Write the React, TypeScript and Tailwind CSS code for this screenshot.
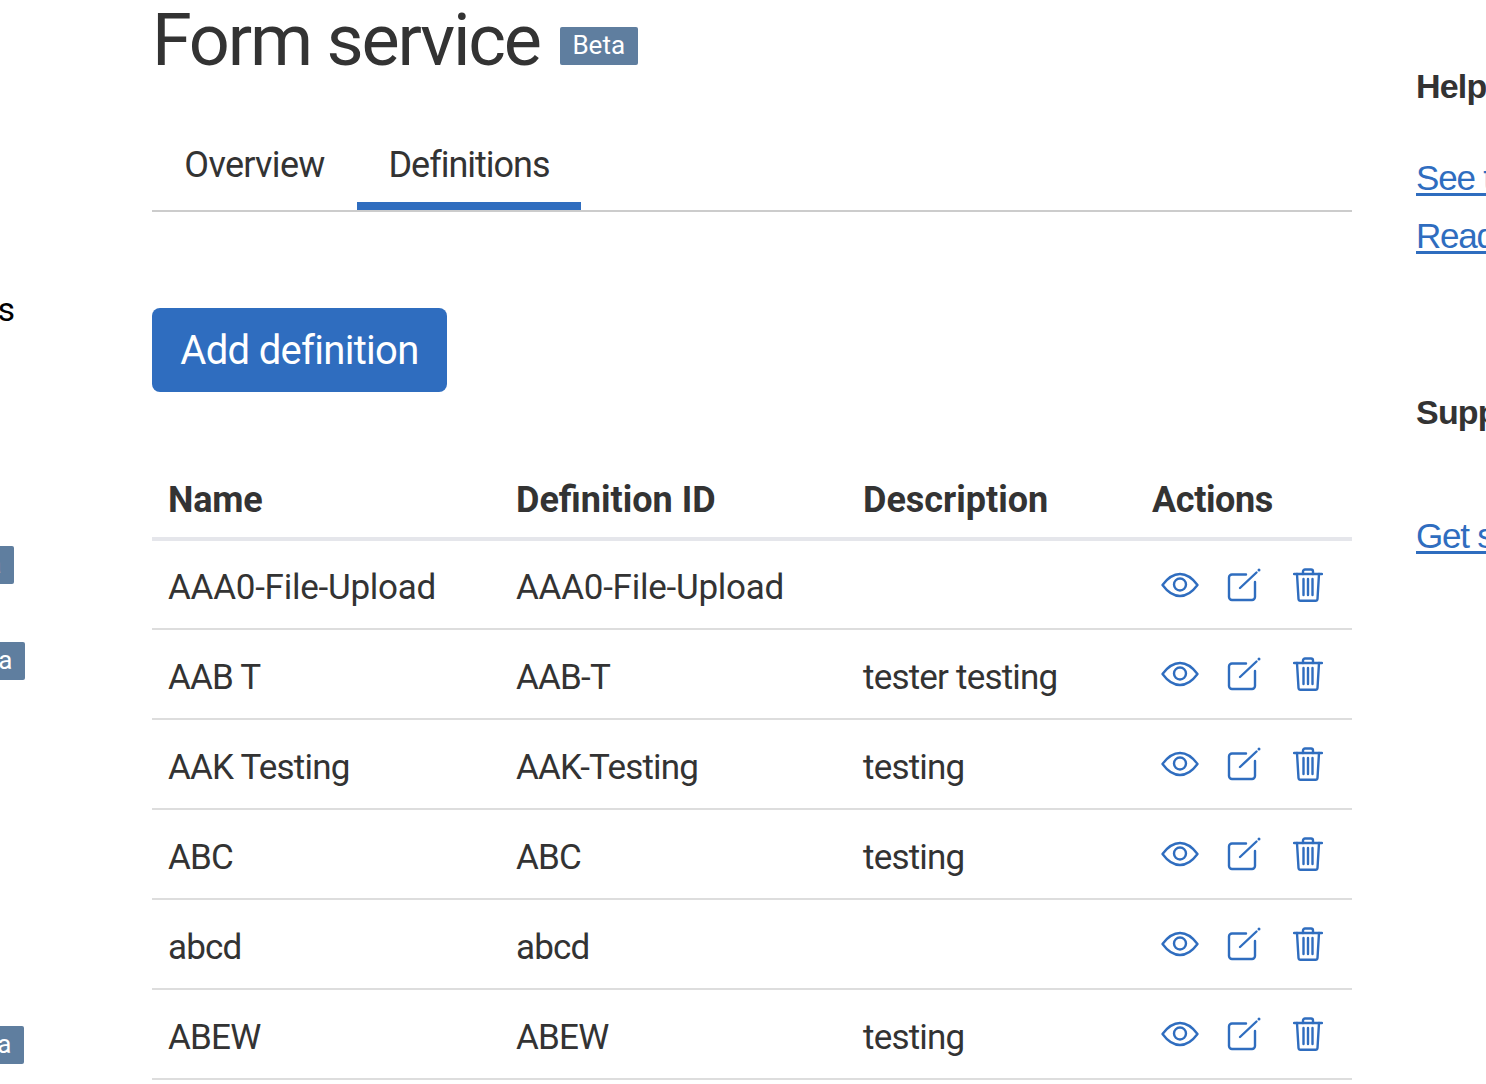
import React from "react";

const rows = [
  { name: "AAA0-File-Upload", id: "AAA0-File-Upload", desc: "", track: "tracking-[-0.25px]" },
  { name: "AAB T", id: "AAB-T", desc: "tester testing", track: "" },
  { name: "AAK Testing", id: "AAK-Testing", desc: "testing", track: "" },
  { name: "ABC", id: "ABC", desc: "testing", track: "" },
  { name: "abcd", id: "abcd", desc: "", track: "" },
  { name: "ABEW", id: "ABEW", desc: "testing", track: "" },
];

function EyeIcon() {
  return (
    <svg width="38" height="26" viewBox="0 0 38 26" fill="none" stroke="#2f6dbf" strokeWidth="2.4" strokeLinejoin="round">
      <path d="M1.5 13C7 5.5 12.5 2 19 2s12 3.5 17.5 11C31 20.5 25.500 24 19 24S7 20.500 1.500 13Z" />
      <circle cx="19" cy="12.500" r="6" />
    </svg>
  );
}

function EditIcon() {
  return (
    <svg width="34" height="34" viewBox="0 0 34 34" fill="none" stroke="#2f6dbf" strokeWidth="2.400" strokeLinecap="round">
      <path d="M19 6.500H5a3 3 0 0 0-3 3V29a3 3 0 0 0 3 3h20a3 3 0 0 0 3-3V14" />
      <path d="M13 20 29.500 4.500" />
      <circle cx="32" cy="2" r="1.500" fill="#2f6dbf" stroke="none" />
    </svg>
  );
}

function TrashIcon() {
  return (
    <svg width="30" height="34" viewBox="0 0 30 34" fill="none" stroke="#2f6dbf" strokeWidth="2.400" strokeLinecap="round" strokeLinejoin="round">
      <path d="M1 6h28" />
      <path d="M10 6V3.500A2 2 0 0 1 12 1.500h6a2 2 0 0 1 2 2V6" />
      <path d="M4 6l1.500 25a2 2 0 0 0 2 1.800h15a2 2 0 0 0 2-1.800L26 6" />
      <path d="M10.500 11v16M15 11v16M19.500 11v16" />
    </svg>
  );
}

function Badge({ className }: { className?: string }) {
  return (
    <span className={`inline-flex h-[38px] w-[78px] shrink-0 items-center justify-center rounded-[2px] bg-[#5f7e9f] pb-[2px] text-[26px] text-white ${className ?? ""}`}>
      Beta
    </span>
  );
}

export default function App() {
  return (
    <div className="flex h-[1084px] w-[1486px] overflow-hidden bg-white font-['Roboto',sans-serif] text-[#333333]">
      {/* Side nav, mostly off screen */}
      <aside className="flex w-[152px] shrink-0 flex-col overflow-hidden pt-[290px] text-black">
        <div className="-ml-[100px] flex h-[38px] w-[115px] items-center justify-end text-[34px] leading-none">
          s
        </div>
        <Badge className="ml-[-64px] mt-[218px]" />
        <Badge className="ml-[-53px] mt-[58px]" />
        <Badge className="ml-[-54px] mt-[346px]" />
      </aside>

      <main className="w-[1200px] shrink-0">
        <div className="flex h-[82px] items-center">
          <h1 className="text-[72px] leading-none font-normal tracking-[-2.2px]">Form service</h1>
          <Badge className="ml-[20px] mt-[10px]" />
        </div>

        {/* Tabs */}
        <div className="mt-[36px] flex h-[94px] border-b-2 border-[#cccccc]">
          <div className="flex h-[92px] w-[205px] items-center justify-center pt-[2px] text-[36px] tracking-[-0.7px]">Overview</div>
          <div className="flex h-[92px] w-[224px] items-center justify-center border-b-8 border-[#2f6dbf] pt-[10px] text-[36px] tracking-[-1px]">
            Definitions
          </div>
        </div>

        <button className="mt-[96px] flex h-[84px] w-[295px] items-center justify-center rounded-lg bg-[#2f6dbf] pt-[2px] text-[40px] tracking-[-0.7px] text-white">
          Add definition
        </button>

        <table className="mt-[63px] w-[1200px] table-fixed border-collapse text-left text-[35px] tracking-[-0.8px]">
          <colgroup>
            <col className="w-[348px]" />
            <col className="w-[347px]" />
            <col className="w-[289px]" />
            <col className="w-[216px]" />
          </colgroup>
          <thead>
            <tr className="h-[84px] border-b-4 border-[#e5e6eb] text-[36px]">
              <th className="px-4 pt-[8px] font-bold tracking-[-0.2px]">Name</th>
              <th className="px-4 pt-[8px] font-bold tracking-normal">Definition ID</th>
              <th className="px-4 pt-[8px] font-bold tracking-normal">Description</th>
              <th className="px-4 pt-[8px] font-bold tracking-[-0.4px]">Actions</th>
            </tr>
          </thead>
          <tbody>
            {rows.map((row) => (
              <tr key={row.id} className="h-[90px] border-b-2 border-[#dddddd]">
                <td className={`px-4 pt-[8px] ${row.track}`}>{row.name}</td>
                <td className={`px-4 pt-[8px] ${row.track}`}>{row.id}</td>
                <td className="px-4 pt-[8px]">{row.desc}</td>
                <td className="pl-[25px]">
                  <div className="flex items-center">
                    <EyeIcon />
                    <span className="ml-[28px]"><EditIcon /></span>
                    <span className="ml-[32px]"><TrashIcon /></span>
                  </div>
                </td>
              </tr>
            ))}
          </tbody>
        </table>
      </main>

      {/* Help column, cut off by the window */}
      <aside className="ml-[64px] flex-1 overflow-hidden whitespace-nowrap pt-[65px] font-['Liberation_Sans',sans-serif] text-[35px] tracking-[-1.2px]">
        <h2 className="h-[42px] text-[34px] leading-[42px] font-bold tracking-[-0.8px]">Help</h2>
        <a className="mt-[50px] block h-[58px] leading-[42px] text-[#2f6dbf] underline decoration-[3px] underline-offset-[3px]">See the docs</a>
        <a className="block h-[58px] leading-[42px] text-[#2f6dbf] underline decoration-[3px] underline-offset-[3px]">Read more</a>
        <h2 className="mt-[118px] h-[42px] text-[34px] leading-[42px] font-bold tracking-[-0.8px]">Support</h2>
        <a className="mt-[82px] block leading-[42px] text-[#2f6dbf] underline decoration-[3px] underline-offset-[3px]">Get support</a>
      </aside>
    </div>
  );
}
